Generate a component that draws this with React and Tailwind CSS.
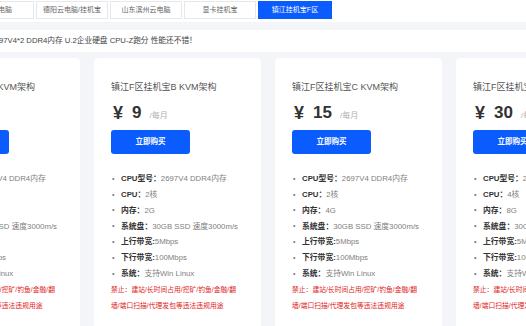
import React from "react";

const FONT = { fontFamily: '"Liberation Sans", "Noto Sans CJK SC", sans-serif' };

const tabs = ["宝云电脑", "德阳云电脑/挂机宝", "山东滨州云电脑", "显卡挂机宝", "镇江挂机宝F区"];

const cards = [
  { name: "A", price: "5", cpu: "1核", mem: "1G" },
  { name: "B", price: "9", cpu: "2核", mem: "2G" },
  { name: "C", price: "15", cpu: "2核", mem: "4G" },
  { name: "D", price: "30", cpu: "4核", mem: "8G" },
];

function Card({ c }) {
  const rows = [
    ["CPU型号：", "2697V4 DDR4内存"],
    ["CPU：", c.cpu],
    ["内存：", c.mem],
    ["系统盘：", "30GB SSD 速度3000m/s"],
    ["上行带宽:", "5Mbps"],
    ["下行带宽:", "100Mbps"],
    ["系统：", "支持Win Linux"],
  ];
  return (
    <div className="w-[167px] shrink-0 bg-white rounded-[4px] pt-[23px] pl-[17px] pr-[10px] h-[300px]">
      <div className="text-[9px] leading-[12px] text-[#555] whitespace-nowrap">
        镇江F区挂机宝{c.name} KVM架构
      </div>
      <div className="mt-[10px] h-[20px] flex items-center whitespace-nowrap">
        <span className="ml-[2px] text-[18px] font-bold text-[#333] leading-[20px]">¥</span>
        <span className="ml-[9px] text-[17px] font-bold text-[#333] leading-[20px]">{c.price}</span>
        <span className="ml-[8px] mt-[6px] text-[8px] text-[#b0b0b0]">/每月</span>
      </div>
      <div className="mt-[7px] w-[79px] h-[24px] rounded-[3px] bg-[#0a5cff] flex items-center justify-center text-white text-[7.5px] font-bold">
        立即购买
      </div>
      <div className="mt-[17px]">
        {rows.map(([k, v]) => (
          <div key={k} className="flex items-center h-[15.85px] text-[7.8px] whitespace-nowrap">
            <span className="w-[10px] pl-px text-[#777] text-[7px]">•</span>
            <span className="font-bold text-[#333]">{k}</span>
            <span className="text-[#808080]">{v}</span>
          </div>
        ))}
        <div className="h-[15.85px] flex items-center text-[6.8px] text-[#e02424] whitespace-nowrap">
          禁止：建站/长时间占用/挖矿/钓鱼/金融/翻
        </div>
        <div className="h-[15.85px] flex items-center text-[6.8px] text-[#e02424] whitespace-nowrap">
          墙/端口扫描/代理发包等违法违规用途
        </div>
      </div>
    </div>
  );
}

export default function App() {
  return (
    <div className="w-[526px] h-[326px] overflow-hidden bg-[#f4f5f9]" style={FONT}>
      <div className="h-[22px] bg-white pt-px">
        <div className="flex gap-[2px] ml-[-38px]">
          {tabs.map((t, i) =>
            i === 4 ? (
              <div key={t} className="w-[74px] h-[18px] shrink-0 bg-[#0a5cff] text-white text-[7px] flex items-center justify-center whitespace-nowrap">
                {t}
              </div>
            ) : (
              <div key={t} className="w-[72px] h-[18px] shrink-0 border border-[#e6e8ee] text-[#666] text-[7px] flex items-center justify-center whitespace-nowrap">
                {t}
              </div>
            )
          )}
        </div>
      </div>
      <div className="mt-[8px] h-[22px] bg-white flex items-center text-[7.7px] text-[#444] whitespace-nowrap">
        <span className="ml-[-1px]">97V4*2 DDR4内存 U.2企业硬盘 CPU-Z跑分 性能还不错！</span>
      </div>
      <div className="mt-[6px] flex gap-[14px] ml-[-87px]">
        {cards.map((c) => (
          <Card key={c.name} c={c} />
        ))}
      </div>
    </div>
  );
}
